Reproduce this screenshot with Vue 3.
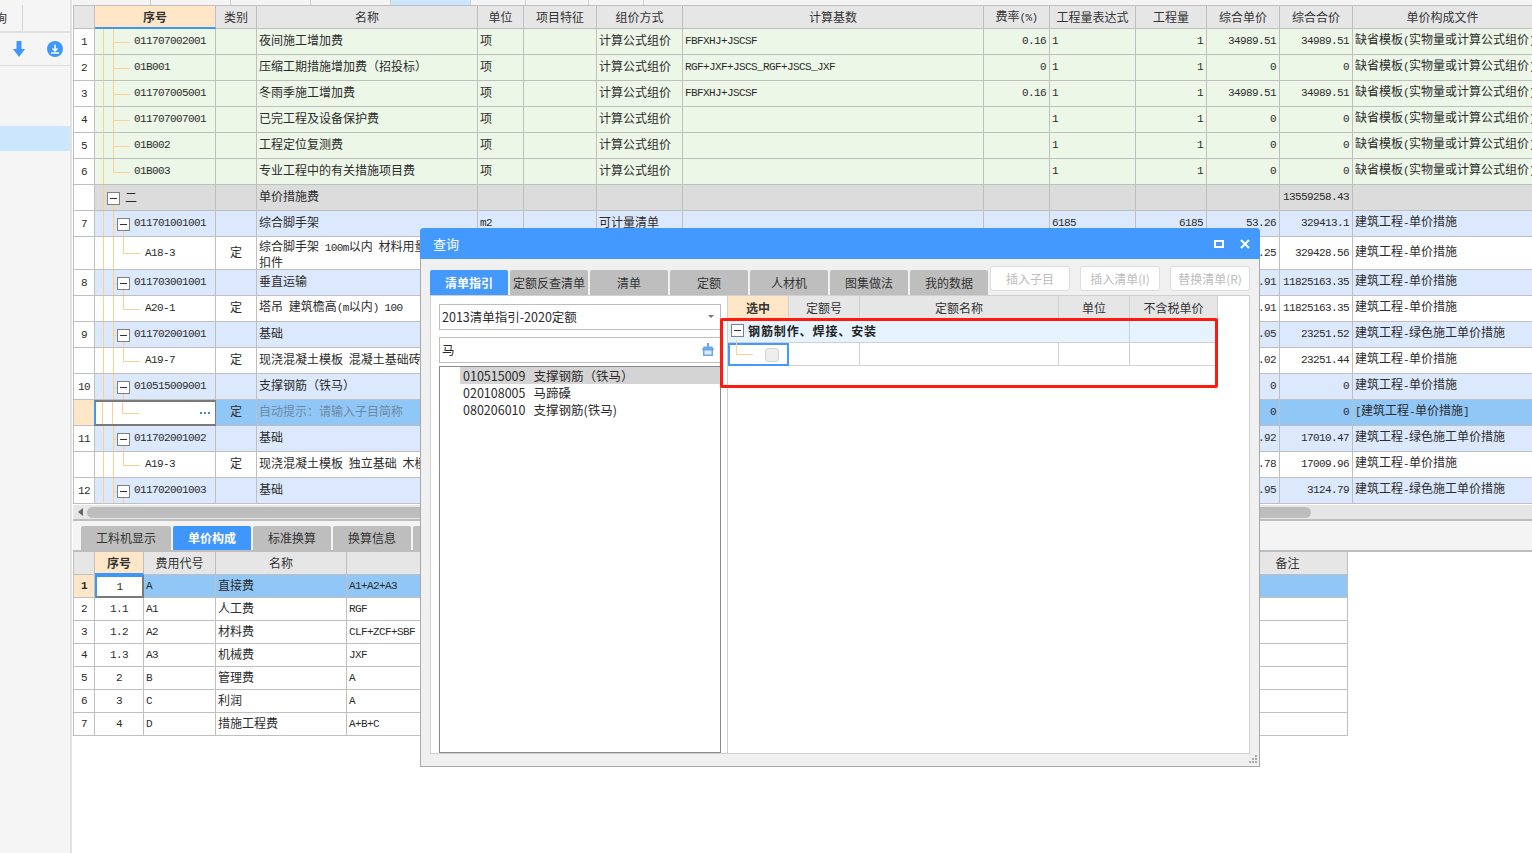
<script setup>
const tip = '缺省模板(实物量或计算公式组价)'
const cj = '建筑工程-单价措施'
const gr = '建筑工程-绿色施工单价措施'
const leaf = (n, code, name, base, rate, price, total, last) => ({
  n, code, name, type: last ? 'leafend' : 'leaf', tone: 'green', unit: '项', method: '计算公式组价',
  base, rate, expr: '1', qty: '1', price, total, file: tip
})
const grp = (n, code, name, price, total, file, extra = {}) => ({
  n, code, name, type: 'grp', tone: 'blue', price, total, file, ...extra
})
const kid = (code, name, price, total, file, extra = {}) => ({
  n: '', code, cat: '定', name, type: 'kid', tone: 'white', price, total, file, ...extra
})
const rows = [
  leaf('1', '011707002001', '夜间施工增加费', 'FBFXHJ+JSCSF', '0.16', '34989.51', '34989.51'),
  leaf('2', '01B001', '压缩工期措施增加费（招投标）', 'RGF+JXF+JSCS_RGF+JSCS_JXF', '0', '0', '0'),
  leaf('3', '011707005001', '冬雨季施工增加费', 'FBFXHJ+JSCSF', '0.16', '34989.51', '34989.51'),
  leaf('4', '011707007001', '已完工程及设备保护费', '', '', '0', '0'),
  leaf('5', '01B002', '工程定位复测费', '', '', '0', '0'),
  leaf('6', '01B003', '专业工程中的有关措施项目费', '', '', '0', '0', true),
  { n: '', code: '二', name: '单价措施费', type: 'sec', tone: 'gray', total: '13559258.43' },
  grp('7', '011701001001', '综合脚手架', '53.26', '329413.1', cj, { unit: 'm2', method: '可计量清单', expr: '6185', qty: '6185' }),
  kid('A18-3', '综合脚手架 100m以内 材料用量\n扣件', '53.25', '329428.56', cj, { tall: true }),
  grp('8', '011703001001', '垂直运输', '1911.91', '11825163.35', cj),
  kid('A20-1', '塔吊 建筑檐高(m以内) 100', '1911.91', '11825163.35', cj),
  grp('9', '011702001001', '基础', '60.05', '23251.52', gr),
  kid('A19-7', '现浇混凝土模板 混凝土基础砖模', '60.02', '23251.44', cj),
  grp('10', '010515009001', '支撑钢筋（铁马）', '0', '0', cj),
  { n: '', code: '', cat: '定', name: '自动提示：请输入子目简称', type: 'kid', tone: 'sel', price: '0', total: '0', file: '[建筑工程-单价措施]' },
  grp('11', '011702001002', '基础', '62.92', '17010.47', gr),
  kid('A19-3', '现浇混凝土模板 独立基础 木模板', '62.78', '17009.96', cj),
  grp('12', '011702001003', '基础', '62.95', '3124.79', gr)
]
const heads = ['', '序号', '类别', '名称', '单位', '项目特征', '组价方式', '计算基数', '费率(%)', '工程量表达式', '工程量', '综合单价', '综合合价', '单价构成文件']
const cols = [
  { k: 'cat', c: 'mid' }, { k: 'name', c: 'wrap' }, { k: 'unit' }, { k: 'feat' }, { k: 'method' }, { k: 'base' },
  { k: 'rate', c: 'end' }, { k: 'expr' }, { k: 'qty', c: 'end' }, { k: 'price', c: 'end' }, { k: 'total', c: 'end' }, { k: 'file' }
]
const lineMap = {
  leaf: ['v8', 'v18', 'h18'],
  leafend: ['v8', 'v18up', 'h18'],
  sec: ['v8', 'v18dn'],
  grp: ['v8', 'v18', 'h18s', 'v28dn'],
  kid: ['v8', 'v18', 'v28up', 'h28']
}
// 半角字符用等宽字体，中文用 12px，还原表格里的宋体点阵比例
const segs = (s) => (s || '').match(/[\x21-\x7e]+|[^\x21-\x7e]+/g)?.map((t) => ({ t, lat: /^[\x21-\x7e]/.test(t) })) || []

const strips = ['s78', 's80', 's80', 's80', 's80 on', 's55', 's63', 's55']
const lowerHeads = ['', '序号', '费用代号', '名称', '计算基数', '', '备注']
const lower = [
  ['1', '1', 'A', '直接费', 'A1+A2+A3'],
  ['2', '1.1', 'A1', '人工费', 'RGF'],
  ['3', '1.2', 'A2', '材料费', 'CLF+ZCF+SBF'],
  ['4', '1.3', 'A3', '机械费', 'JXF'],
  ['5', '2', 'B', '管理费', 'A'],
  ['6', '3', 'C', '利润', 'A'],
  ['7', '4', 'D', '措施工程费', 'A+B+C']
]
const bottomTabs = ['工料机显示', '单价构成', '标准换算', '换算信息', '']
const dlgTabs = ['清单指引', '定额反查清单', '清单', '定额', '人材机', '图集做法', '我的数据']
const dlgBtns = ['插入子目', '插入清单(I)', '替换清单(R)']
const results = [
  ['010515009', '支撑钢筋（铁马）'],
  ['020108005', '马蹄磉'],
  ['080206010', '支撑钢筋(铁马)']
]
const quotaHeads = ['选中', '定额号', '定额名称', '单位', '不含税单价']
</script>

<template>
  <div class="page">
    <aside class="side">
      <div class="side-top"><span class="side-tab"><span class="side-word">询</span></span></div>
      <div class="side-tools">
        <svg class="ic-down" viewBox="0 0 12 16"><path d="M3.500 0h5v8H12L6 16 0 8h3.500z" fill="#4096ff" /></svg>
        <svg class="ic-save" viewBox="0 0 16 16">
          <circle cx="8" cy="8" r="8" fill="#4096ff" />
          <path d="M8 3.500v6M5.500 7.500 8 10l2.500-2.500M4 12h8" fill="none" stroke="#fff" stroke-width="1.500" />
        </svg>
      </div>
      <div class="side-sel"></div>
    </aside>

    <main class="main">
      <div class="strip">
        <span v-for="(s, i) in strips" :key="i" class="strip-cell" :class="s"></span>
      </div>

      <section class="sheet">
        <div class="row head">
          <div v-for="(h, i) in heads" :key="i" class="cell hcell" :class="{ focus: i === 1 }">
            <span class="txt"><span v-for="(s, j) in segs(h)" :key="j" :class="{ lat: s.lat }">{{ s.t }}</span></span>
          </div>
        </div>
        <div v-for="(r, ri) in rows" :key="ri" class="row" :class="[r.tone, { tall: r.tall }]">
          <div class="cell num mono">{{ r.n }}</div>
          <div class="cell tree" :class="['t-' + r.type, { cur: r.tone === 'sel' }]">
            <span v-for="l in lineMap[r.type]" :key="l" class="ln" :class="l"></span>
            <span v-if="r.type === 'sec' || r.type === 'grp'" class="box"></span>
            <span class="code" :class="{ cjk: r.type === 'sec' }">{{ r.code }}</span>
            <span v-if="r.tone === 'sel'" class="dots"></span>
          </div>
          <div v-for="c in cols" :key="c.k" class="cell body" :class="[c.c, 'c-' + c.k]">
            <span class="txt"><span v-for="(s, j) in segs(r[c.k])" :key="j" :class="{ lat: s.lat }">{{ s.t }}</span></span>
          </div>
        </div>
      </section>

      <div class="scroll">
        <svg class="arrow" viewBox="0 0 5 8"><path d="M5 0v8L0 4z" fill="#666" /></svg>
        <div class="thumb"></div>
      </div>

      <div class="tabbar">
        <span v-for="(t, i) in bottomTabs" :key="i" class="btab" :class="{ on: i === 1, wide: i === 0 }">{{ t }}</span>
      </div>

      <section class="lower">
        <div class="lrow lhead">
          <div v-for="(h, i) in lowerHeads" :key="i" class="cell hcell" :class="{ focus: i === 1 }">{{ h }}</div>
        </div>
        <div v-for="(r, i) in lower" :key="i" class="lrow" :class="{ lsel: i === 0 }">
          <div class="cell num mono">{{ r[0] }}</div>
          <div class="cell mid mono seq">{{ r[1] }}</div>
          <div class="cell mono">{{ r[2] }}</div>
          <div class="cell body">{{ r[3] }}</div>
          <div class="cell mono">{{ r[4] }}</div>
          <div class="cell"></div>
          <div class="cell"></div>
        </div>
      </section>
    </main>

    <div class="dialog">
      <header class="dtitle">
        <span>查询</span>
        <span class="wbtns">
          <svg class="wmax" viewBox="0 0 10 8"><rect x="1" y="1" width="8" height="6" fill="none" stroke="#fff" stroke-width="2" /></svg>
          <svg class="wclose" viewBox="0 0 10 10"><path d="M1 1l8 8M9 1 1 9" stroke="#fff" stroke-width="2" /></svg>
        </span>
      </header>

      <div class="dbar">
        <div class="dtabs">
          <span v-for="(t, i) in dlgTabs" :key="t" class="dtab" :class="{ on: i === 0 }">{{ t }}</span>
        </div>
        <div class="dbtns">
          <button v-for="b in dlgBtns" :key="b" class="dbtn" type="button">{{ b }}</button>
        </div>
      </div>

      <div class="panel">
        <div class="lpane">
          <div class="field select">
            <span>2013清单指引-2020定额</span>
            <i class="caret"></i>
          </div>
          <div class="field search">
            <span>马</span>
            <svg class="broom" viewBox="0 0 12 13">
              <path d="M5 0h2v3.500h3.500l.5 2H12V7h-1v6H1V7H0V5.500h1l.5-2H5z" fill="#6aa8e8" />
              <path d="M2.500 7.500h7v4h-7z" fill="#dcecfb" />
            </svg>
          </div>
          <div class="list">
            <div v-for="(r, i) in results" :key="r[0]" class="item" :class="{ on: i === 0 }">
              <span class="icode">{{ r[0] }}</span><span>{{ r[1] }}</span>
            </div>
          </div>
        </div>

        <div class="rpane">
          <div class="qrow qhead">
            <div v-for="(h, i) in quotaHeads" :key="h" class="qcell qh" :class="{ focus: i === 0 }">{{ h }}</div>
          </div>
          <div class="qrow qgroup">
            <div class="qcell qspan">
              <span class="qbox"></span>
              <b>钢筋制作、焊接、安装</b>
            </div>
            <div class="qcell"></div>
          </div>
          <div class="qrow">
            <div class="qcell qcur">
              <span class="qln"></span>
              <span class="qcheck"></span>
            </div>
            <div class="qcell"></div><div class="qcell"></div><div class="qcell"></div><div class="qcell"></div>
          </div>
        </div>
      </div>

      <div class="redmark"></div>
      <svg class="grip" viewBox="0 0 8 8">
        <path d="M6 0h2v2H6zM3 3h2v2H3zM6 3h2v2H6zM0 6h2v2H0zM3 6h2v2H3zM6 6h2v2H6z" fill="#a8a8a8" />
      </svg>
    </div>
  </div>
</template>

<style>
html, body { margin: 0; background: #fff; overflow: hidden; }
</style>

<style scoped>
.page {
  display: flex;
  width: 1532px;
  height: 853px;
  overflow: hidden;
  position: relative;
  background: #fff;
  font-family: "Noto Sans CJK SC", "Liberation Sans", sans-serif;
  font-size: 12px;
  color: #2b2b2b;
}

/* 左侧栏 */
.side {
  flex: 0 0 70px;
  background: #f5f5f5;
  border-right: 2px solid #e2e2e2;
  padding-top: 5px;
}
.side-top {
  height: 26px;
  border-bottom: 2px solid #e0e0e0;
  overflow: hidden;
}
.side-tab {
  display: block;
  width: 22px;
  height: 26px;
  line-height: 26px;
  border-right: 1px solid #d4d4d4;
  overflow: hidden;
}
.side-word { margin-left: -5px; display: inline-block; color: #333; }
.side-tools {
  height: 32px;
  border-bottom: 1px solid #dcdcdc;
  display: flex;
  align-items: center;
  padding-left: 13px;
  gap: 22px;
}
.ic-down { width: 12px; height: 16px; }
.ic-save { width: 16px; height: 16px; }
.side-sel { height: 25px; margin-top: 60px; background: #cbe6fd; }

/* 主区域 */
.main { flex: 1; min-width: 0; overflow: hidden; display: flex; flex-direction: column; padding-left: 1px; }
.strip { display: flex; height: 5px; flex: none; background: #f4f4f4; }
.strip-cell { box-sizing: border-box; border-right: 1px solid #cfcfcf; }
.s78 { width: 78px; }
.s80 { width: 80px; }
.s55 { width: 55px; }
.s63 { width: 63px; }
.strip-cell.on { background: #cbe6fd; }

.sheet { flex: none; }
.row {
  display: grid;
  grid-template-columns: 22px 121px 41px 221px 46px 73px 86px 301px 66px 86px 71px 73px 73px 180px;
  height: 26px;
  width: 1460px;
}
.row.head { height: 24px; background: #e6e6e6; border-top: 1px solid #bfbfbf; box-sizing: border-box; }
.row.tall { height: 33px; }
.cell {
  box-sizing: border-box;
  border-right: 1px solid #bfbfbf;
  border-bottom: 1px solid #bfbfbf;
  padding: 0 2px;
  white-space: nowrap;
  overflow: hidden;
  display: flex;
  align-items: center;
  line-height: 14px;
  position: relative;
}
.cell.body { padding-bottom: 3px; }
.cell:first-child { border-left: 1px solid #bfbfbf; }
.txt { display: block; white-space: inherit; }
.hcell { justify-content: center; color: #333; }
.hcell.focus { background: #ffe6c7; font-weight: 700; border-bottom: 2px solid #3f97f5; }
.lat, .mono, .code {
  font-family: "Liberation Mono", monospace;
  font-size: 11px;
  letter-spacing: -0.6px;
}
.mid { justify-content: center; }
.end { justify-content: flex-end; padding-right: 3px; }
.wrap { white-space: pre-line; }
.c-name { word-spacing: 3px; }
.tall .wrap { line-height: 13px; padding-bottom: 0; }
.num { justify-content: center; background: #fff; padding: 0; }

.green .cell:not(.num) { background: #edf7e8; }
.blue .cell:not(.num) { background: #dce9fc; }
.gray .cell:not(.num) { background: #dcdcdc; }
.sel .cell:not(.num) { background: #90c7f7; }
.sel .num { background: #ffe6c7; }
.sel .c-name { color: #6d8aa3; }
.sel .tree.cur {
  background: #fff;
  border: 2px solid #7a7a7a;
  border-left-color: #3f97f5;
  margin-left: -1px;
  margin-right: -1px;
}

.tree { padding: 0 0 1px; }
.code { padding-left: 39px; }
.code.cjk { font-family: "Noto Sans CJK SC", sans-serif; font-size: 12px; letter-spacing: 0; padding-left: 30px; }
.t-kid .code { padding-left: 50px; }
.ln { position: absolute; background: #fdcf90; }
.v8 { left: 8px; top: 0; bottom: 0; width: 1px; }
.v18 { left: 18px; top: 0; bottom: 0; width: 1px; }
.v18up { left: 18px; top: 0; height: 50%; width: 1px; }
.v18dn { left: 18px; top: 50%; bottom: 0; width: 1px; }
.v28dn { left: 28px; top: 50%; bottom: 0; width: 1px; }
.v28up { left: 28px; top: 0; height: 50%; width: 1px; }
.h18 { left: 18px; top: 50%; width: 17px; height: 1px; }
.h18s { left: 18px; top: 50%; width: 5px; height: 1px; }
.h28 { left: 28px; top: 50%; width: 17px; height: 1px; }
.cur .v8 { left: 6px; }
.cur .v18 { left: 16px; }
.cur .v28up { left: 26px; }
.cur .h28 { left: 26px; }
.box {
  position: absolute;
  left: 22px;
  top: 50%;
  margin-top: -6px;
  width: 13px;
  height: 13px;
  box-sizing: border-box;
  border: 1px solid #808080;
  background: linear-gradient(#333, #333) center / 7px 1px no-repeat #fff;
}
.t-sec .box { left: 12px; }
.dots {
  position: absolute;
  right: 5px;
  top: 10px;
  width: 10px;
  height: 2px;
  background: repeating-linear-gradient(90deg, #3f88d0 0 2px, transparent 2px 4px);
}

/* 滚动条 */
.scroll {
  flex: none;
  height: 14px;
  margin-top: 1px;
  background: #e6e6e6;
  border-bottom: 2px solid #bdbdbd;
  display: flex;
  align-items: center;
  padding-left: 5px;
  gap: 4px;
}
.arrow { width: 5px; height: 8px; }
.thumb { width: 1224px; height: 11px; border-radius: 6px; background: #bdbdbd; }

/* 下方页签 */
.tabbar {
  flex: none;
  height: 31px;
  box-sizing: border-box;
  background: #f4f4f4;
  display: flex;
  align-items: flex-end;
  gap: 2px;
  padding-left: 8px;
  border-bottom: 2px solid #bdbdbd;
}
.btab {
  width: 78px;
  height: 24px;
  line-height: 24px;
  text-align: center;
  background: #bebebe;
  border-radius: 2px 2px 0 0;
  color: #333;
}
.btab.wide { width: 90px; }
.btab.on { background: #4096ff; color: #fff; font-weight: 700; }

/* 下方表格 */
.lrow {
  display: grid;
  grid-template-columns: 22px 49px 72px 131px 254px 627px 120px;
  height: 23px;
  width: 1275px;
}
.lrow .cell.body { padding-bottom: 2px; }
.lhead .cell { background: #e6e6e6; }
.lhead .cell.focus { background: #ffe6c7; }
.lsel .cell { background: #90c7f7; }
.lsel .num { background: #ffe6c7; font-weight: 700; }
.lsel .seq {
  background: #fff;
  border: 2px solid #7a7a7a;
  border-left-color: #3f97f5;
  border-top-color: #3f97f5;
}

/* 查询弹窗 */
.dialog {
  position: absolute;
  left: 420px;
  top: 228px;
  width: 840px;
  height: 539px;
  box-sizing: border-box;
  background: #f0f0f0;
  border: 1px solid #a9a9a9;
  border-top: 0;
  border-radius: 4px 4px 0 0;
  display: flex;
  flex-direction: column;
  color: #2b2b2b;
}
.dtitle {
  height: 31px;
  flex: none;
  margin: 0 -1px;
  padding: 0 10px 0 13px;
  background: #4499ff;
  border-radius: 4px 4px 0 0;
  color: #fff;
  font-size: 13px;
  display: flex;
  align-items: center;
  justify-content: space-between;
}
.wbtns { display: flex; align-items: center; gap: 16px; }
.wmax { width: 10px; height: 8px; }
.wclose { width: 10px; height: 10px; }

.dbar {
  flex: none;
  height: 36px;
  padding: 0 9px;
  display: flex;
  justify-content: space-between;
  align-items: flex-start;
  box-sizing: border-box;
}
.dtabs { display: flex; gap: 2px; padding-top: 11px; }
.dtab {
  width: 78px;
  height: 25px;
  line-height: 25px;
  text-align: center;
  white-space: nowrap;
  background: #bebebe;
  border-radius: 2px 2px 0 0;
  color: #333;
}
.dtab.on { background: #4499ff; color: #fff; font-weight: 700; }
.dbtns { display: flex; gap: 10px; padding-top: 7px; }
.dbtn {
  width: 80px;
  height: 25px;
  padding: 0;
  background: #fff;
  border: 1px solid #dcdcdc;
  border-radius: 3px;
  font: inherit;
  color: #bcbcbc;
}

.panel {
  flex: none;
  height: 459px;
  width: 820px;
  margin-left: 9px;
  box-sizing: border-box;
  background: #fff;
  border: 1px solid #d0d0d0;
  display: flex;
}
.lpane {
  flex: 0 0 297px;
  box-sizing: border-box;
  border-right: 1px solid #d0d0d0;
  padding: 8px 6px 0 8px;
  display: flex;
  flex-direction: column;
  font-size: 12.500px;
}
.field {
  height: 26px;
  flex: none;
  box-sizing: border-box;
  border: 1px solid #bdbdbd;
  padding: 0 2px 1px;
  display: flex;
  align-items: center;
  justify-content: space-between;
}
.select { margin-bottom: 7px; }
.search { margin-bottom: 3px; }
.caret {
  width: 0;
  height: 0;
  margin-right: 4px;
  border: 3px solid transparent;
  border-top: 3px solid #777;
  border-bottom: 0;
}
.broom { width: 12px; height: 13px; margin-right: 4px; }
.list {
  flex: 1;
  box-sizing: border-box;
  border: 1px solid #8a8a8a;
  padding: 0 0 0 20px;
}
.item { height: 17px; line-height: 17px; padding-left: 3px; white-space: nowrap; }
.item.on { background: #d4d4d4; }
.icode { margin-right: 8px; }

.rpane { flex: 1; min-width: 0; }
.qrow {
  display: grid;
  grid-template-columns: 61px 71px 199px 71px 88px;
  width: 490px;
  height: 23px;
}
.qgroup { height: 24px; grid-template-columns: 402px 88px; background: #e5f3fe; }
.qcell {
  box-sizing: border-box;
  border-right: 1px solid #d0d0d0;
  border-bottom: 1px solid #d0d0d0;
  display: flex;
  align-items: center;
  position: relative;
}
.qh { justify-content: center; background: #e6e6e6; color: #333; }
.qh.focus { background: #ffe6c7; font-weight: 700; }
.qspan { padding-left: 3px; gap: 4px; }
.qspan b { letter-spacing: 0.9px; color: #222; }
.qbox {
  width: 13px;
  height: 13px;
  box-sizing: border-box;
  border: 1px solid #808080;
  background: linear-gradient(#333, #333) center / 7px 1px no-repeat #fff;
}
.qcur { border: 2px solid #4499ff; }
.qln {
  position: absolute;
  left: 6px;
  top: -5px;
  width: 16px;
  height: 14px;
  border-left: 1px solid #fdcf90;
  border-bottom: 1px solid #fdcf90;
}
.qcheck {
  position: absolute;
  left: 35px;
  top: 3px;
  width: 14px;
  height: 14px;
  box-sizing: border-box;
  background: #eee;
  border: 1px solid #d2d2d2;
  border-radius: 3px;
}
.redmark {
  position: absolute;
  left: 299px;
  top: 90px;
  width: 498px;
  height: 70px;
  box-sizing: border-box;
  border: 3px solid #ff1a0e;
  border-radius: 2px;
}
.grip { position: absolute; right: 2px; bottom: 3px; width: 8px; height: 8px; }
</style>
